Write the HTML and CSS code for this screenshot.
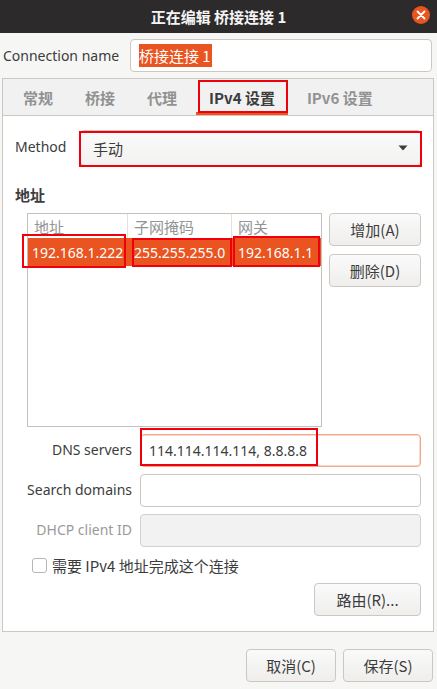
FILE: index.html
```html
<!DOCTYPE html>
<html lang="zh">
<head>
<meta charset="utf-8">
<link rel="stylesheet" href="styles.css">
</head>
<body>
<div class="window">
  <header class="titlebar">
    <div class="tb-spacer"></div>
    <div class="tb-title">正在编辑 桥接连接 1</div>
    <div class="tb-actions">
      <span class="close-btn">
        <svg width="10" height="10" viewBox="0 0 10 10"><path d="M1.5 1.5 L8.5 8.5 M8.5 1.5 L1.5 8.5" stroke="#fff" stroke-width="1.8" stroke-linecap="round"/></svg>
      </span>
    </div>
  </header>

  <div class="conn-row">
    <label class="conn-label latin">Connection name</label>
    <div class="entry conn-entry"><span class="sel">桥接连接 1</span></div>
  </div>

  <div class="notebook">
    <div class="tabs">
      <div class="tab">常规</div>
      <div class="tab">桥接</div>
      <div class="tab">代理</div>
      <div class="tab active"><span class="mark mark-tab"></span>IPv4 设置</div>
      <div class="tab">IPv6 设置</div>
    </div>
    <div class="panel">
      <div class="method-row">
        <span class="method-label latin">Method</span>
        <div class="combo">
          <span class="mark mark-combo"></span>
          <span>手动</span>
          <svg class="arrow" width="10" height="6" viewBox="0 0 10 6"><path d="M0.5 0.5 H9.5 L5 5.5 Z" fill="#3c3c3c"/></svg>
        </div>
      </div>

      <div class="section-title">地址</div>

      <div class="addr-area">
        <div class="table">
          <div class="thead">
            <div class="th c1">地址</div>
            <div class="th c2">子网掩码</div>
            <div class="th c3">网关</div>
          </div>
          <div class="tr selected latin">
            <div class="td c1"><span class="mark mark-c1"></span>192.168.1.222</div>
            <div class="td c2"><span class="mark mark-c2"></span>255.255.255.0</div>
            <div class="td c3"><span class="mark mark-c3"></span>192.168.1.1</div>
          </div>
        </div>
        <div class="side-btns">
          <button class="btn side">增加(A)</button>
          <button class="btn side">删除(D)</button>
        </div>
      </div>

      <div class="form">
        <label class="flabel latin">DNS servers</label>
        <div class="entry dns latin"><span class="mark mark-dns"></span>114.114.114.114, 8.8.8.8</div>
        <label class="flabel latin">Search domains</label>
        <div class="entry"></div>
        <label class="flabel latin disabled">DHCP client ID</label>
        <div class="entry dis"></div>
      </div>

      <div class="check-row">
        <span class="checkbox"></span>
        <span>需要 IPv4 地址完成这个连接</span>
      </div>

      <div class="route-row">
        <button class="btn route">路由(R)...</button>
      </div>
    </div>
  </div>

  <div class="footer">
    <button class="btn foot">取消(C)</button>
    <button class="btn foot">保存(S)</button>
  </div>
</div>
</body>
</html>
```

FILE: styles.css
```css
* { box-sizing: border-box; }
html, body { margin: 0; padding: 0; }
body {
  width: 437px;
  height: 689px;
  background: #f6f6f5;
  font-family: "Noto Sans CJK SC", "Noto Sans", sans-serif;
  font-size: 15px;
  color: #3c3c3c;
  overflow: hidden;
}
.latin { font-family: "Noto Sans", "Noto Sans CJK SC", sans-serif; font-size: 14px; }
.window { display: flex; flex-direction: column; height: 689px; }

.titlebar {
  height: 33px;
  background: #2c2a2b;
  display: grid;
  grid-template-columns: 1fr auto 1fr;
  align-items: center;
}
.tb-title {
  color: #f4f4f4;
  font-weight: bold;
  font-size: 15px;
}
.tb-actions { display: flex; justify-content: flex-end; padding-right: 7px; }
.close-btn {
  width: 18px; height: 18px; border-radius: 50%;
  background: #e95420;
  display: flex; align-items: center; justify-content: center;
  margin-top: -3px;
}

.conn-row {
  display: flex; align-items: center;
  padding: 6px 5px 6px 3px;
}
.conn-label { width: 127px; flex: none; }
.entry {
  background: #fff;
  border: 1px solid #cdc7c2;
  border-radius: 4px;
  height: 33px;
  display: flex; align-items: center;
  padding: 0 8px;
  position: relative;
}
.conn-entry { flex: 1; }
.sel { background: #e95420; color: #fff; padding: 0 1px 0 0; line-height: 23px; }

.notebook {
  margin: 0 3px 0 2px;
  border: 1px solid #cdc7c2;
  display: flex; flex-direction: column;
}
.tabs {
  height: 37px;
  background: #f1f1f1;
  border-bottom: 1px solid #cdc7c2;
  display: flex; align-items: stretch;
  padding-left: 7px;
}
.tab {
  padding: 0 13px;
  margin-right: 6px;
  display: flex; align-items: center;
  color: #929292;
  font-weight: bold;
  position: relative;
}
.tab.active {
  color: #3c3c3c;
  box-shadow: inset 0 -3px 0 #e95420;
}
.mark { position: absolute; border: 2px solid #f0000a; pointer-events: none; }
.mark-tab { left: 2px; right: 0; top: 1px; bottom: 2px; }

.panel {
  background: #fff;
  padding: 14px 12px 15px 12px;
  display: flex; flex-direction: column;
}
.method-row { display: flex; align-items: center; gap: 12px; }
.method-label { margin-top: -4px; width: 53px; }
.combo {
  flex: 1;
  height: 36px;
  border: 1px solid #cdc7c2;
  border-radius: 4px;
  background: linear-gradient(#fafafa, #f3f2f1);
  display: flex; align-items: center; justify-content: space-between;
  padding: 0 12px 0 12px;
  position: relative;
}
.mark-combo { left: -2px; right: -2px; top: 0; bottom: -2px; }

.section-title {
  font-weight: bold;
  margin-top: 18px;
  line-height: 22px;
}
.addr-area {
  display: flex; gap: 7px;
  margin-top: 7px;
  padding-left: 12px;
}
.table {
  width: 295px;
  height: 214px;
  border: 1px solid #c5c1bd;
  background: #fff;
}
.thead { display: flex; height: 24px; color: #949494; }
.th { display: flex; align-items: center; padding-left: 6px; border-right: 1px solid #e4e2e0; }
.th.c3 { border-right: none; }
.c1 { width: 100px; }
.c2 { width: 104px; }
.c3 { flex: 1; }
.tr { display: flex; height: 28px; }
.tr.selected { background: #e95420; color: #fff; }
.td { display: flex; align-items: center; padding-left: 4px; position: relative; white-space: nowrap; }
.td.c2, .td.c3 { padding-left: 6px; }
.mark-c1 { left: -6px; right: 2px; top: -4px; bottom: -2px; }
.mark-c2 { left: 4px; right: 0; top: 0; bottom: -1px; }
.mark-c3 { left: 1px; right: 1px; top: -2px; bottom: -1px; }

.side-btns { display: flex; flex-direction: column; gap: 8px; }
.btn {
  font-family: "Noto Sans CJK SC", "Noto Sans", sans-serif;
  font-size: 15px;
  color: #3c3c3c;
  background: linear-gradient(#fafafa, #efeeed);
  border: 1px solid #cdc7c2;
  border-radius: 4px;
  padding: 0;
}
.btn.side { width: 92px; height: 33px; }

.form {
  display: grid;
  grid-template-columns: 117px 1fr;
  column-gap: 8px;
  row-gap: 7px;
  margin-top: 7px;
  align-items: center;
}
.flabel { text-align: right; margin-top: -3px; }
.flabel.disabled { color: #9a9a9a; }
.entry.dns { border-color: #f3a68b; box-shadow: 0 0 0 1px #fbd9cc inset; }
.mark-dns { left: -1px; top: -7px; width: 178px; bottom: 0; }
.entry.dis { background: #f2f2f2; border-color: #d3d0cd; }

.check-row { display: flex; align-items: center; gap: 5px; margin-top: 8px; padding-left: 17px; }
.checkbox {
  width: 15px; height: 15px; border: 1px solid #b9b5b1; border-radius: 3px; background: #fff;
}
.route-row { display: flex; justify-content: flex-end; margin-top: 7px; }
.btn.route { width: 107px; height: 33px; }

.footer {
  display: flex; justify-content: flex-end; gap: 7px;
  padding: 17px 4px 0 0;
}
.btn.foot { width: 90px; height: 33px; }
```
